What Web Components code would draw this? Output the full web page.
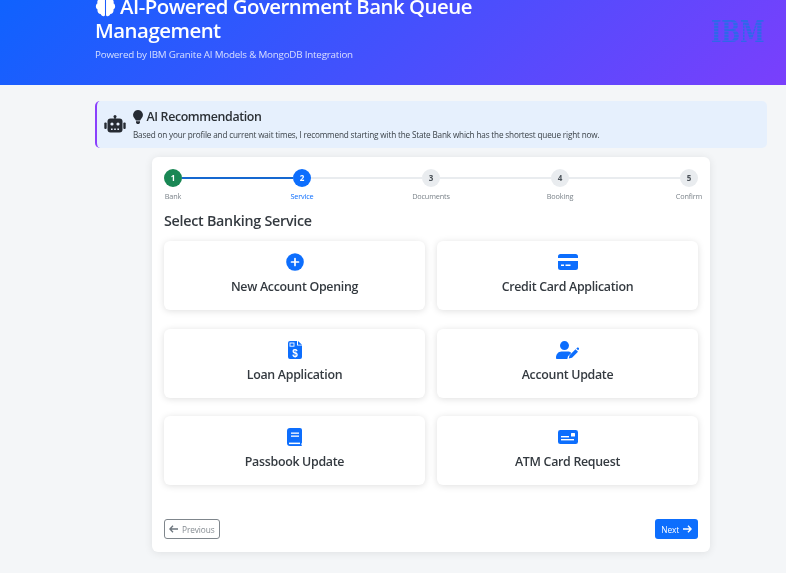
<!DOCTYPE html>
<html lang="en"><head><meta charset="utf-8"><title>Bank Queue</title>
<style>
html,body{margin:0;height:573px;overflow:hidden;background:#f4f6f8;font-family:"Open Sans","Noto Sans",sans-serif;color:#343a40}
body{filter:blur(.35px)}
</style></head><body>
<app-header></app-header>
<main-area>
  <ai-alert></ai-alert>
  <wizard-card>
    <step-bar></step-bar>
    <section-title>Select Banking Service</section-title>
    <service-grid>
      <service-tile icon="plus" label="New Account Opening"></service-tile>
      <service-tile icon="card" label="Credit Card Application"></service-tile>
      <service-tile icon="file" label="Loan Application"></service-tile>
      <service-tile icon="user" label="Account Update"></service-tile>
      <service-tile icon="book" label="Passbook Update"></service-tile>
      <service-tile icon="atm" label="ATM Card Request"></service-tile>
    </service-grid>
    <nav-row></nav-row>
  </wizard-card>
</main-area>
<script>
const def=(n,html)=>customElements.define(n,class extends HTMLElement{connectedCallback(){if(this.shadowRoot)return;const r=this.attachShadow({mode:'open'});r.innerHTML=typeof html==='function'?html(this):html;}});
const brain='<svg viewBox="0 0 24 24" width="21" height="21" fill="#fff"><path d="M11.400 3.200C11.400 1.800 9.800.8 8.500.8 7 .8 5.900 1.900 5.700 3.200 3.900 3.500 2.600 5 2.600 6.800c0 .5.100 1 .3 1.500C1.700 9.100 1 10.400 1 11.900c0 1.500.8 2.900 2 3.600-.1.400-.2.800-.2 1.200 0 2.100 1.600 3.800 3.600 4 .5 1.400 1.800 2.400 3.200 2.400.8 0 1.800-.6 1.800-1.400z"/><path d="M12.600 3.200C12.600 1.800 14.200.8 15.500.8c1.500 0 2.600 1.100 2.800 2.400 1.800.3 3.100 1.800 3.100 3.600 0 .5-.1 1-.3 1.500 1.200.8 1.900 2.100 1.900 3.600 0 1.500-.8 2.900-2 3.600.1.400.2.800.2 1.200 0 2.100-1.600 3.800-3.600 4-.5 1.400-1.800 2.400-3.200 2.400-.8 0-1.800-.6-1.800-1.400z"/></svg>';
def('app-header',`<style>
:host{display:block;height:85px;overflow:hidden;background:linear-gradient(135deg,#0f62fe 0%,#7a3ffc 100%);color:#fff}
.in{display:flex;align-items:center;justify-content:space-between;margin:-22px 21px 0 95px;height:100px}
h1{margin:0;font-size:20.400px;line-height:24px;font-weight:600;width:400px;letter-spacing:-.5px}
h1 svg{vertical-align:-3px;margin-right:4px}
p{margin:6px 0 0;font-size:9.800px;line-height:14px;letter-spacing:-.2px;opacity:.8}
.logo{font:700 30px/30px "DejaVu Serif",serif;color:transparent;background:repeating-linear-gradient(180deg,#2f67ea 0 2px,#4f56f4 2px 3px);-webkit-background-clip:text;background-clip:text;margin-top:8px;transform:scale(.74,1);transform-origin:right center}
</style><div class="in"><div><h1>${brain}AI-Powered Government Bank Queue Management</h1><p>Powered by IBM Granite AI Models &amp; MongoDB Integration</p></div><div class="logo">IBM</div></div>`);
def('main-area',`<style>:host{display:block;width:672px;margin:16px 0 0 95px}</style><slot></slot>`);
def('ai-alert',`<style>
:host{display:flex;box-sizing:border-box;height:47px;align-items:center;gap:7px;background:#e6f0fd;border-left:2px solid #8a3ffc;border-radius:5px;padding:0 9px 0 7px}
h2{margin:-1px 0 0;font-size:12.400px;line-height:16px;font-weight:600;color:#2b3035;display:flex;align-items:center;gap:3.500px;letter-spacing:-.37px}
p{margin:4px 0 0;font-size:8.200px;line-height:11px;color:#3b4248;letter-spacing:-.17px}
.bot{margin-top:-2px}
</style>
<svg class="bot" width="22" height="18" viewBox="0 0 22 18" fill="#262b33"><circle cx="11" cy="1.500" r="1.500"/><rect x="10.300" y="2" width="1.400" height="2"/><rect x="3.500" y="3.500" width="15" height="14" rx="3"/><rect x=".3" y="7.500" width="2.400" height="6.500" rx="1"/><rect x="19.300" y="7.500" width="2.400" height="6.500" rx="1"/><circle cx="8" cy="9" r="1.600" fill="#e6f0fd"/><circle cx="14" cy="9" r="1.600" fill="#e6f0fd"/><rect x="7" y="13.500" width="1.600" height="1.500" fill="#e6f0fd"/><rect x="10.200" y="13.500" width="1.600" height="1.500" fill="#e6f0fd"/><rect x="13.400" y="13.500" width="1.600" height="1.500" fill="#e6f0fd"/></svg>
<div><h2><svg width="10" height="14" viewBox="0 0 10 14" fill="#262b33"><path d="M5 0a4.900 4.900 0 0 0-3.600 8.200C2 9 2.700 9.800 2.900 10.500h4.200c.2-.7.900-1.500 1.500-2.300A4.900 4.900 0 0 0 5 0z"/><path d="M3 11.300h4v.9c0 .9-.8 1.800-2 1.800s-2-.9-2-1.800z"/></svg>AI Recommendation</h2>
<p>Based on your profile and current wait times, I recommend starting with the State Bank which has the shortest queue right now.</p></div>`);
def('wizard-card',`<style>:host{display:block;box-sizing:border-box;width:558px;height:395px;margin:9px 0 0 57px;background:#fff;border-radius:6px;padding:12px;box-shadow:0 1px 8px rgba(0,0,0,.09)}</style><slot></slot>`);
const steps=[['1','Bank','done'],['2','Service','active'],['3','Documents',''],['4','Booking',''],['5','Confirm','']];
def('step-bar',()=>`<style>
:host{display:flex;align-items:flex-start}
.s{flex:none;width:18px;display:flex;flex-direction:column;align-items:center}
.c{flex:none;width:18px;height:18px;border-radius:50%;background:#e9ecef;color:#495057;font-size:8px;font-weight:700;line-height:18px;text-align:center}
.l{margin-top:4px;font-size:7.300px;line-height:11px;white-space:nowrap;color:#7b838a;letter-spacing:-.15px}
.done .c{background:#198754;color:#fff}.active .c{background:#0d6efd;color:#fff}.active .l{color:#0d6efd}
.b{flex:1;height:2px;margin-top:8px;background:#e9ecef}.b.on{background:#1568d0}
</style>`+steps.map((s,i)=>`${i?`<div class="b ${i==1?'on':''}"></div>`:''}<div class="s ${s[2]}"><div class="c">${s[0]}</div><div class="l">${s[1]}</div></div>`).join(''));
def('section-title',`<style>:host{display:block;margin-top:9px;font-size:14.300px;line-height:20px;font-weight:600;color:#343a40;letter-spacing:-.27px}</style><slot></slot>`);
def('service-grid',`<style>:host{display:grid;grid-template-columns:261px 261px;column-gap:12px;row-gap:18.500px;margin-top:10px}</style><slot></slot>`);
const icons={
plus:'<svg width="18" height="18" viewBox="0 0 18 18"><circle cx="9" cy="9" r="8.800" fill="#0d6efd"/><path d="M9 5.500v7M5.500 9h7" stroke="#fff" stroke-width="1.700" stroke-linecap="round"/></svg>',
card:'<svg width="20" height="16" viewBox="0 0 20 16" fill="#0d6efd"><path d="M2.500 0h15A2.500 2.500 0 0 1 20 2.500V4H0V2.500A2.500 2.500 0 0 1 2.500 0zM0 7h20v6.500a2.500 2.500 0 0 1-2.500 2.500h-15A2.500 2.500 0 0 1 0 13.500z"/><rect x="3" y="10.500" width="3" height="1.500" fill="#fff"/><rect x="7.500" y="10.500" width="5" height="1.500" fill="#fff"/></svg>',
file:'<svg width="14" height="18" viewBox="0 0 14 18"><path d="M2 0h7v4.500h5V16a2 2 0 0 1-2 2H2a2 2 0 0 1-2-2V2a2 2 0 0 1 2-2z" fill="#0d6efd"/><path d="M10 0l4 3.700h-4z" fill="#0d6efd"/><rect x="2" y="2" width="4" height="3.200" fill="none" stroke="#fff" stroke-width=".9"/><text x="7" y="15.500" font-size="10" font-weight="700" text-anchor="middle" fill="#fff" font-family="Liberation Sans">$</text></svg>',
user:'<svg width="23" height="18" viewBox="0 0 23 18" fill="#0d6efd"><circle cx="8.500" cy="4.600" r="4.500"/><path d="M5.500 10.500h6c1.500 0 2.800.5 3.800 1.400l-3.300 3.300-.7 2.800H1.100C.5 18 0 17.500 0 16.900 0 13.400 2.200 10.500 5.500 10.500z"/><path d="M13.500 14.300l6-6 2.500 2.500-6 6-3.200.7zM20.300 7.500l.8-.8c.4-.4 1-.4 1.400 0l.3.300c.4.400.4 1 0 1.400l-.8.8z"/></svg>',
book:'<svg width="15" height="18" viewBox="0 0 15 18"><path d="M3 0h10a2 2 0 0 1 2 2v12.500c0 .6-.3 1-.8 1.200v.8c.5.100.8.500.8.800 0 .4-.4.700-1 .700H3a3 3 0 0 1-3-3V3a3 3 0 0 1 3-3z" fill="#0d6efd"/><rect x="4" y="4.500" width="8" height="1.300" fill="#fff"/><rect x="4" y="7.500" width="8" height="1.300" fill="#fff"/><rect x="2" y="14.600" width="11" height="1.500" fill="#fff"/></svg>',
atm:'<svg width="20" height="14" viewBox="0 0 20 14"><rect width="20" height="14" rx="2.300" fill="#0d6efd"/><rect x="3" y="6" width="8" height="1.400" fill="#fff"/><rect x="3" y="9" width="13" height="1.400" fill="#fff"/><rect x="13" y="3" width="4" height="3.600" rx=".5" fill="#fff"/></svg>'};
def('service-tile',t=>`<style>
:host{display:flex;flex-direction:column;align-items:center;box-sizing:border-box;height:69px;padding-top:11px;background:#fff;border-radius:6px;box-shadow:0 1px 7px rgba(0,0,0,.13)}
.i{height:20px;display:flex;align-items:center;justify-content:center}
.t{margin-top:6px;font-size:12.400px;line-height:17px;font-weight:600;color:#343a40;letter-spacing:-.3px}
</style><div class="i">${icons[t.getAttribute('icon')]}</div><div class="t">${t.getAttribute('label')}</div>`);
def('nav-row',`<style>
:host{display:flex;justify-content:space-between;margin-top:34px}
.b{box-sizing:border-box;height:20px;border-radius:3px;display:flex;align-items:center;gap:3.500px;font-size:8.300px;letter-spacing:-.1px}
.p{width:56px;justify-content:center;border:1px solid #7f868c;color:#858c92}
.n{width:43px;justify-content:center;background:#0d6efd;color:#fff}
</style><div class="b p"><svg width="9" height="8" viewBox="0 0 9 8" fill="none" stroke="#6c757d" stroke-width="1.300"><path d="M9 4H1M4 .8L.9 4 4 7.200"/></svg>Previous</div><div class="b n">Next<svg width="9" height="8" viewBox="0 0 9 8" fill="none" stroke="#fff" stroke-width="1.400"><path d="M0 4h8M5 .8L8.100 4 5 7.200"/></svg></div>`);
</script>
</body></html>
